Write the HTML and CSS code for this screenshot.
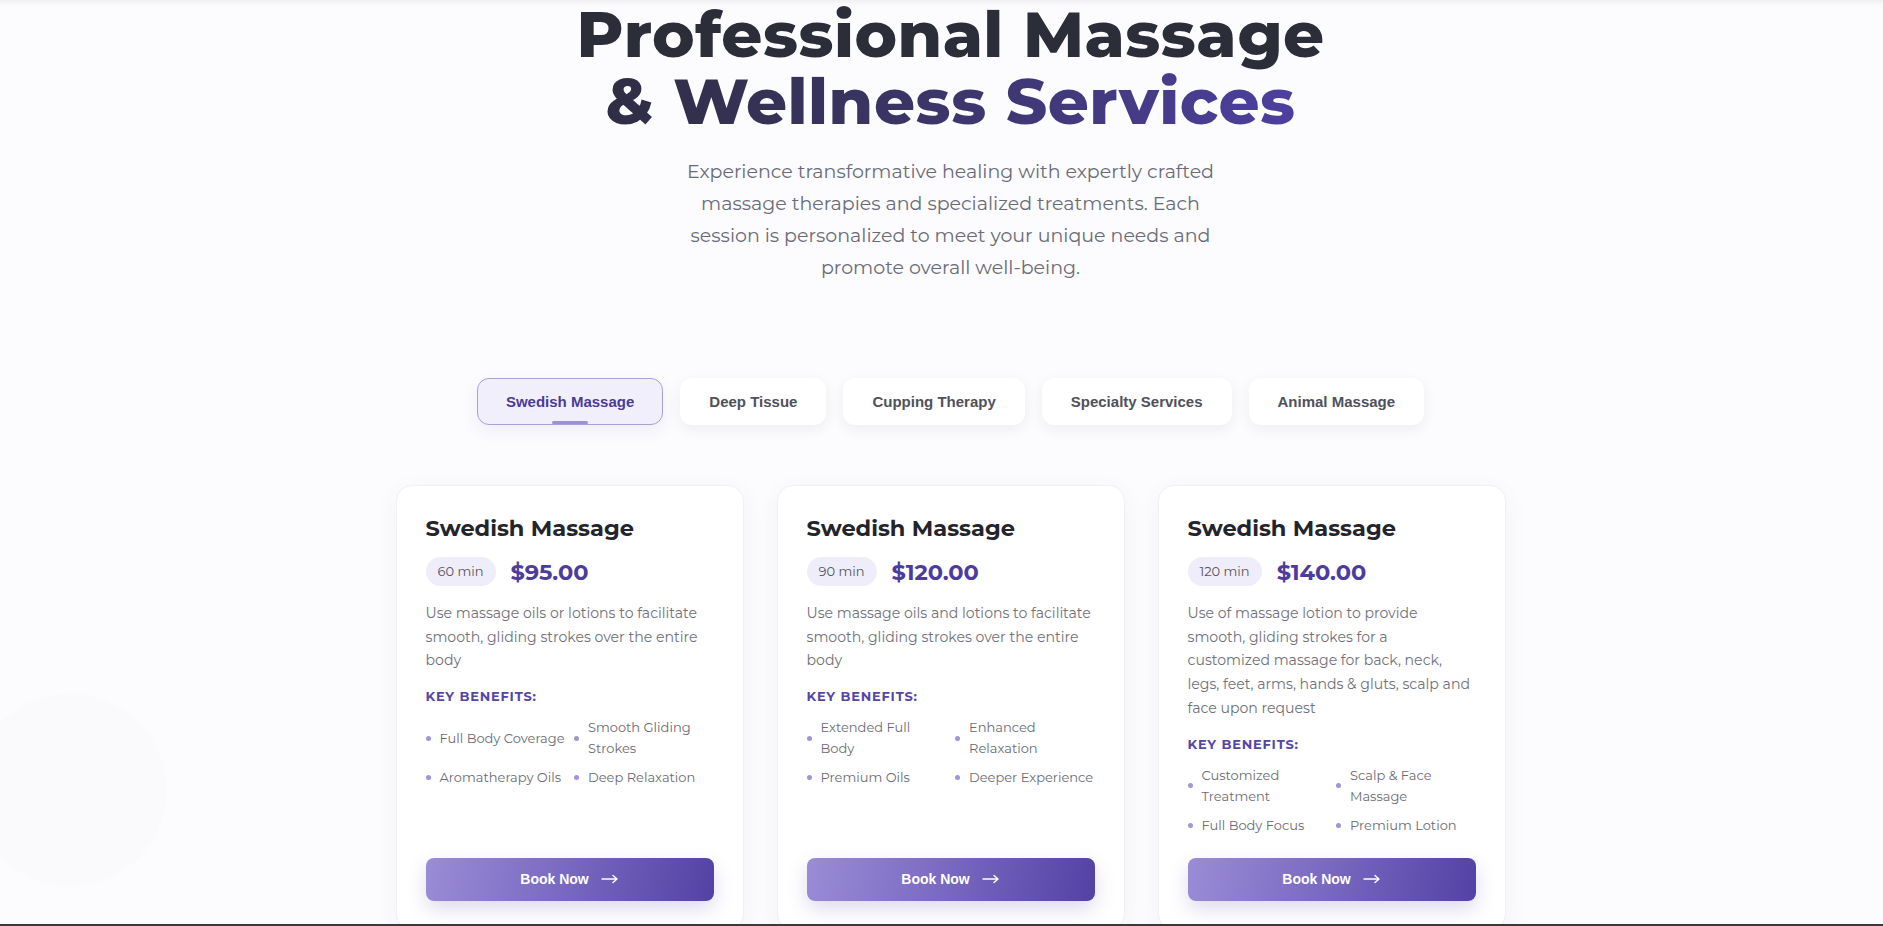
FILE: index.html
```html
<!DOCTYPE html>
<html lang="en">
<head>
  <meta charset="UTF-8">
  <title>Massage &amp; Wellness Services</title>
  <link rel="stylesheet" href="styles.css">
</head>
<body>
  <main class="services">
    <header class="intro">
      <h1>Professional Massage<br><span class="accent">&amp; Wellness Services</span></h1>
      <p>Experience transformative healing with expertly crafted<br>
        massage therapies and specialized treatments. Each<br>
        session is personalized to meet your unique needs and<br>
        promote overall well-being.</p>
    </header>

    <nav class="tabs">
      <button class="tab active">Swedish Massage</button>
      <button class="tab">Deep Tissue</button>
      <button class="tab">Cupping Therapy</button>
      <button class="tab">Specialty Services</button>
      <button class="tab">Animal Massage</button>
    </nav>

    <section class="cards">
      <article class="card">
        <h3>Swedish Massage</h3>
        <div class="price-row">
          <span class="duration">60 min</span>
          <span class="price">$95.00</span>
        </div>
        <p class="desc">Use massage oils or lotions to facilitate smooth, gliding strokes over the entire body</p>
        <h4>Key Benefits:</h4>
        <ul class="benefits">
          <li>Full Body Coverage</li>
          <li>Smooth Gliding Strokes</li>
          <li>Aromatherapy Oils</li>
          <li>Deep Relaxation</li>
        </ul>
        <a class="book" href="#">Book Now
          <svg width="18" height="10" viewBox="0 0 18 10"><path d="M1 5h15M12 1.5l4 3.5-4 3.5" fill="none" stroke="currentColor" stroke-width="1.4" stroke-linecap="round" stroke-linejoin="round"/></svg>
        </a>
      </article>

      <article class="card">
        <h3>Swedish Massage</h3>
        <div class="price-row">
          <span class="duration">90 min</span>
          <span class="price">$120.00</span>
        </div>
        <p class="desc">Use massage oils and lotions to facilitate smooth, gliding strokes over the entire body</p>
        <h4>Key Benefits:</h4>
        <ul class="benefits">
          <li>Extended Full Body</li>
          <li>Enhanced Relaxation</li>
          <li>Premium Oils</li>
          <li>Deeper Experience</li>
        </ul>
        <a class="book" href="#">Book Now
          <svg width="18" height="10" viewBox="0 0 18 10"><path d="M1 5h15M12 1.5l4 3.5-4 3.5" fill="none" stroke="currentColor" stroke-width="1.4" stroke-linecap="round" stroke-linejoin="round"/></svg>
        </a>
      </article>

      <article class="card">
        <h3>Swedish Massage</h3>
        <div class="price-row">
          <span class="duration">120 min</span>
          <span class="price">$140.00</span>
        </div>
        <p class="desc">Use of massage lotion to provide smooth, gliding strokes for a<br>customized massage for back, neck, legs, feet, arms, hands &amp; gluts, scalp and face upon request</p>
        <h4>Key Benefits:</h4>
        <ul class="benefits">
          <li>Customized Treatment</li>
          <li>Scalp &amp; Face Massage</li>
          <li>Full Body Focus</li>
          <li>Premium Lotion</li>
        </ul>
        <a class="book" href="#">Book Now
          <svg width="18" height="10" viewBox="0 0 18 10"><path d="M1 5h15M12 1.5l4 3.5-4 3.5" fill="none" stroke="currentColor" stroke-width="1.4" stroke-linecap="round" stroke-linejoin="round"/></svg>
        </a>
      </article>
    </section>
  </main>
  <div class="bottom-line"></div>
</body>
</html>
```

FILE: styles.css
```css
body {
  margin: 0;
  font-family: Montserrat, Inter, "Noto Sans", sans-serif;
  color: #2a2b35;
  background-color: #fcfcfe;
  background-image:
    radial-gradient(circle at 70px 790px, #fafafd 0, #fafafd 95px, transparent 98px),
    linear-gradient(180deg, #f0f0f3 0, #fcfcfe 6px);
  background-repeat: no-repeat;
  min-height: 926px;
}

.services {
  padding-left: 18px;
}

/* intro */
.intro {
  text-align: center;
}

.intro h1 {
  margin: 1px 0 0;
  font-size: 64px;
  font-weight: 800;
  line-height: 67px;
  letter-spacing: 0.5px;
  color: #2b2d38;
}

.intro h1 .accent {
  background: linear-gradient(90deg, #2f2e44 0%, #3b3566 45%, #4d3f9f 100%);
  -webkit-background-clip: text;
  background-clip: text;
  color: transparent;
}

.intro p {
  margin: 21px 0 0;
  font-size: 19px;
  line-height: 32px;
  color: #6b6b78;
}

/* tabs */
.tabs {
  display: flex;
  justify-content: center;
  gap: 17px;
  margin-top: 94px;
}

.tab {
  position: relative;
  padding: 14px 28px;
  border: 1px solid transparent;
  border-radius: 12px;
  background: #fff;
  box-shadow: 0 4px 14px rgba(40, 40, 80, 0.07);
  font-family: "Liberation Sans", Arial, sans-serif;
  font-size: 15px;
  font-weight: bold;
  line-height: 17px;
  color: #50515b;
  cursor: pointer;
}

.tab.active {
  background: #f2effc;
  border-color: #ab9fd8;
  color: #4a3b98;
  box-shadow: 0 6px 16px rgba(80, 60, 160, 0.08);
}

.tab.active::after {
  content: "";
  position: absolute;
  left: 50%;
  bottom: 0;
  width: 36px;
  height: 3px;
  margin-left: -18px;
  border-radius: 2px;
  background: #9d90d6;
}

/* cards */
.cards {
  display: grid;
  grid-template-columns: repeat(3, 348px);
  justify-content: center;
  gap: 33px;
  margin-top: 60px;
}

.card {
  display: flex;
  flex-direction: column;
  padding: 26px 29px 28px;
  background: #fff;
  border: 1px solid #f1f1f5;
  border-radius: 16px;
  box-shadow: 0 6px 24px rgba(60, 50, 120, 0.05);
}

.card h3 {
  margin: 0;
  font-size: 22.5px;
  font-weight: 700;
  line-height: 32px;
  color: #23242c;
}

.price-row {
  display: flex;
  align-items: center;
  gap: 15px;
  margin-top: 13px;
}

.duration {
  padding: 6px 12px;
  border-radius: 15px;
  background: #f0edfa;
  font-size: 13px;
  line-height: 17px;
  color: #555560;
}

.price {
  font-size: 22.5px;
  font-weight: 700;
  color: #4d3c9e;
}

.desc {
  margin: 16px 0 0;
  font-size: 14.1px;
  line-height: 23.7px;
  color: #70707a;
}

.card h4 {
  margin: 14px 0 0;
  font-size: 13px;
  font-weight: 700;
  line-height: 18px;
  text-transform: uppercase;
  letter-spacing: 0.8px;
  color: #5646a6;
}

.benefits {
  display: grid;
  grid-template-columns: 1fr 1fr;
  column-gap: 9px;
  row-gap: 8px;
  margin: 12px 0 22px;
  padding: 0;
  list-style: none;
}

.benefits li {
  display: flex;
  align-items: center;
  gap: 9px;
  font-size: 13px;
  line-height: 21px;
  color: #6b6b75;
}

.benefits li::before {
  content: "";
  flex: none;
  width: 5px;
  height: 5px;
  border-radius: 50%;
  background: #a195d6;
}

.book {
  display: flex;
  align-items: center;
  justify-content: center;
  gap: 12px;
  height: 43px;
  margin-top: auto;
  border-radius: 8px;
  background: linear-gradient(100deg, #9b8cd6 0%, #7b6bc3 45%, #5342a3 100%);
  box-shadow: 0 8px 20px rgba(90, 70, 170, 0.2);
  font-family: "Liberation Sans", Arial, sans-serif;
  font-size: 14px;
  font-weight: bold;
  color: #fff;
  text-decoration: none;
}

.bottom-line {
  position: fixed;
  left: 0;
  right: 0;
  bottom: 0;
  height: 2px;
  background: #3a3a3e;
}
```
